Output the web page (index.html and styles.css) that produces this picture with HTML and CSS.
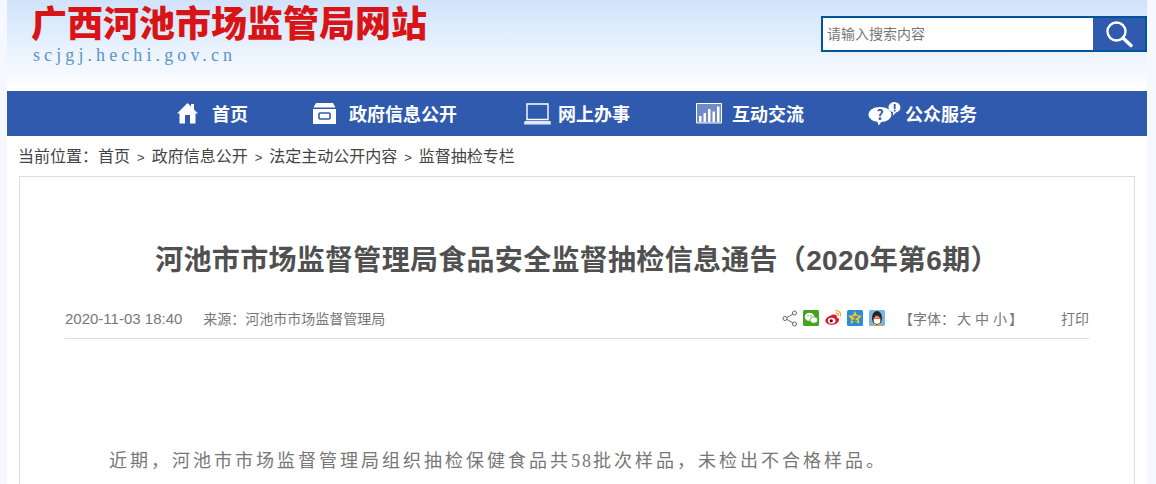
FILE: index.html
```html
<!DOCTYPE html>
<html lang="zh-CN">
<head>
  <meta charset="UTF-8">
  <title>河池市市场监督管理局食品安全监督抽检信息通告</title>
  <link rel="stylesheet" href="styles.css">
</head>
<body>
  <div class="page">
    <header class="top">
      <div class="logo">
        <div class="logo-name">广西河池市场监管局网站</div>
        <div class="logo-url">scjgj.hechi.gov.cn</div>
      </div>
      <form class="search">
        <div class="search-input">请输入搜索内容</div>
        <div class="search-btn">
          <svg width="28" height="28" viewBox="0 0 28 28"><circle cx="11.500" cy="11.500" r="9" fill="none" stroke="#fff" stroke-width="2.400"/><path d="M18 18l8 7.500" stroke="#fff" stroke-width="3.400" stroke-linecap="round"/></svg>
        </div>
      </form>
    </header>

    <nav class="nav">
      <a class="nav-item nav-home" href="#">
        <svg width="21" height="21" viewBox="0 0 21 21"><path fill="#fff" d="M10.500 0L14 3.400V1h3v5.400L21 10.500H18.500V20.500H13V12H8V20.500H2.500V10.500H0z"/></svg>
        <span>首页</span>
      </a>
      <a class="nav-item nav-gov" href="#">
        <svg width="23" height="21" viewBox="0 0 23 21"><path fill="#fff" d="M3 0H20L22.500 4.500H.5zM0 6H23V21H0z"/><rect x="6" y="10" width="11" height="6" rx="1" fill="#fff" stroke="#2f5aad" stroke-width="1.600"/></svg>
        <span>政府信息公开</span>
      </a>
      <a class="nav-item nav-online" href="#">
        <svg width="27" height="22" viewBox="0 0 27 22"><path fill="none" stroke="#fff" stroke-width="1.400" d="M3 1H24V16.500H3z"/><path fill="#dfe6f4" d="M.5 18H26.500L27 21.500H0z"/></svg>
        <span>网上办事</span>
      </a>
      <a class="nav-item nav-talk" href="#">
        <svg width="26" height="21" viewBox="0 0 26 21"><path fill="#6f8cc8" stroke="#fff" d="M.5.5H25.500V20H.5z"/><path fill="#fff" d="M3 13h2.500v6H3zM7.500 10H10v9H7.500zM12 6h2.500v13H12zM16.500 8.500H19V19h-2.500zM21 3.500h2.500V19H21z"/></svg>
        <span>互动交流</span>
      </a>
      <a class="nav-item nav-public" href="#">
        <svg width="33" height="24" viewBox="0 0 33 24"><path fill="#fff" d="M12 5c6.500 0 11.500 3 11.500 7.500S18 20 13.500 20L10.500 23.500 9.500 19.800C4 19 .5 16.500.5 12.500S5.500 5 12 5z"/><path fill="#fff" d="M26.500 0A6 6 0 0 1 32.500 5.500C32.500 8 30.500 10 28 10.500L25 13.500 25 10.200C22.500 9.500 20.500 8 20.500 5.500 20.500 2.500 23 0 26.500 0z"/><text x="12" y="17.500" class="nav-q">?</text><path fill="#2f5aad" d="M25.800 2h1.800v5h-1.800zM25.800 7.800h1.800v1.600h-1.800z"/></svg>
        <span>公众服务</span>
      </a>
    </nav>

    <div class="crumb">
      当前位置：<a href="#">首页</a><i>&gt;</i><a href="#">政府信息公开</a><i>&gt;</i><a href="#">法定主动公开内容</a><i>&gt;</i><a href="#">监督抽检专栏</a>
    </div>

    <main class="article">
      <h1 class="article-title">河池市市场监督管理局食品安全监督抽检信息通告（2020年第6期）</h1>
      <div class="meta">
        <div class="meta-left">
          <span class="meta-time">2020-11-03 18:40</span>
          <span>来源：河池市市场监督管理局</span>
        </div>
        <div class="meta-right">
          <svg class="share" width="16" height="17" viewBox="0 0 16 17"><path fill="none" stroke="#666" d="M12.500 3L3.500 8.500L12.500 14"/><circle cx="12.500" cy="3" r="2" fill="#fff" stroke="#666"/><circle cx="3" cy="8.500" r="2" fill="#fff" stroke="#666"/><circle cx="12.500" cy="14" r="2" fill="#fff" stroke="#666"/></svg>
          <svg class="social" width="16" height="16" viewBox="0 0 16 16"><rect width="16" height="16" rx="1.500" fill="#3fa51f"/><ellipse cx="6.500" cy="6.800" rx="4.800" ry="4" fill="#fff"/><ellipse cx="10.800" cy="10" rx="3.800" ry="3.200" fill="#fff" stroke="#3fa51f" stroke-width=".7"/><circle cx="5" cy="5.800" r=".7" fill="#3fa51f"/><circle cx="8" cy="5.800" r=".7" fill="#3fa51f"/></svg>
          <svg class="social" width="16" height="16" viewBox="0 .5 16.200 16.200"><path fill="#e6162d" d="M7 5.500C10.500 4.500 12.500 6 12 8 14 8.500 14.800 10 13.800 12 12.500 15 8.500 16 5.500 15.500 2.500 15 .3 13.500.3 11.500.3 9 3.500 6.500 7 5.500z"/><ellipse cx="6.800" cy="11.300" rx="3.800" ry="3" fill="#fff"/><circle cx="6.300" cy="11.500" r="1.700" fill="#222"/><path fill="none" stroke="#f5a623" stroke-width="1.300" d="M10.500 1.200C14 .8 16.500 3.500 15.800 7M10.800 3.800C12.500 3.500 13.800 5 13.400 6.700"/></svg>
          <svg class="social" width="16" height="16" viewBox="0 0 16 16"><rect width="16" height="16" rx="1.500" fill="#2a8ce0"/><path fill="#fbc71c" d="M8 1l2 4.200 5 .6-3.500 3.300 1 4.700L8 11.500 3.500 13.800l1-4.700L1 5.800l5-.6z"/><path fill="none" stroke="#2a7ac8" stroke-width="1.200" d="M5.800 6.800H10L6 10.800H10.400"/></svg>
          <svg class="social" width="16" height="16" viewBox="0 0 16 16"><rect width="16" height="16" rx="1.500" fill="#74b7ee"/><ellipse cx="8" cy="8" rx="5" ry="7" fill="#222"/><ellipse cx="8" cy="10.200" rx="3.400" ry="3.800" fill="#fff"/><path fill="#f5a11c" d="M5.500 5.800H10.500L8 7.400zM3.500 13.500H7.300V15.200H3zM8.800 13.500H12.500L13 15.200H8.800z"/><path fill="#e0352b" d="M4 7.500H12L11.700 8.800H4.300z"/></svg>
          <span class="font-size">【字体：<a href="#">大</a><a href="#">中</a><a href="#">小</a>】</span>
          <a class="print" href="#">打印</a>
        </div>
      </div>
      <p class="article-text">近期，河池市市场监督管理局组织抽检保健食品共<span class="num">58</span>批次样品，未检出不合格样品。</p>
    </main>
  </div>
</body>
</html>
```

FILE: styles.css
```css
* {
  margin: 0;
  padding: 0;
  box-sizing: border-box;
}

html, body {
  height: 484px;
  overflow: hidden;
}

body {
  font-family: "Liberation Sans", "Noto Sans CJK SC", sans-serif;
  background: #f5f8ff;
  color: #555;
}

a {
  color: inherit;
  text-decoration: none;
}

.page {
  width: 1140px;
  height: 484px;
  margin-left: 7px;
  background: #fff;
  overflow: hidden;
}

/* header */
.top {
  height: 91px;
  background: linear-gradient(#d0e3fb, #ffffff);
  display: flex;
  justify-content: space-between;
  padding-left: 24px;
}

.logo-name {
  font-family: "Liberation Sans", "Noto Sans CJK SC", sans-serif;
  font-size: 36px;
  font-weight: 900;
  line-height: 38px;
  padding-top: 6px;
  color: #da1416;
}

.logo-url {
  font-family: "Liberation Serif", serif;
  font-size: 18px;
  letter-spacing: 4.1px;
  line-height: 20px;
  color: #5a95c8;
  margin-top: 1px;
  padding-left: 2px;
}

.search {
  display: flex;
  width: 326px;
  height: 36px;
  margin-top: 16px;
  border: 2px solid #02559b;
}

.search-input {
  flex: 1;
  background: #fff;
  font-size: 14px;
  line-height: 32px;
  padding-left: 4px;
  color: #777;
}

.search-btn {
  width: 52px;
  background: #2f5aad;
  display: flex;
  align-items: center;
  justify-content: center;
}

/* nav */
.nav {
  height: 45px;
  background: #2f5aad;
  display: flex;
  align-items: center;
  padding-left: 170px;
}

.nav-item {
  display: flex;
  align-items: center;
  gap: 14px;
  color: #fff;
  font-family: "Noto Sans CJK SC", sans-serif;
  font-size: 18px;
  font-weight: 700;
}

.nav-item span {
  margin-top: -2px;
}

.nav-home { margin-right: 65px; }
.nav-gov { margin-right: 67px; gap: 13px; }
.nav-online { margin-right: 66px; gap: 7px; }
.nav-talk { margin-right: 64px; gap: 10px; }
.nav-public { gap: 4px; }

.nav-q {
  fill: #2f5aad;
  font-size: 14px;
  font-weight: 700;
  text-anchor: middle;
}

/* breadcrumb */
.crumb {
  height: 40px;
  padding: 11px 0 0 11px;
  font-size: 16px;
  line-height: 20px;
  color: #444;
}

.crumb i {
  font-style: normal;
  font-size: 13px;
  margin: 0 7px;
}

/* article */
.article {
  width: 1116px;
  height: 400px;
  margin-left: 12px;
  border: 1px solid #ddd;
  padding: 0 45px;
}

.article-title {
  margin-top: 64px;
  font-size: 28px;
  letter-spacing: .3px;
  line-height: 40px;
  font-weight: 700;
  text-align: center;
  color: #505050;
}

.meta {
  margin-top: 20px;
  height: 38px;
  border-bottom: 1px solid #ddd;
  display: flex;
  justify-content: space-between;
  align-items: center;
  font-size: 14px;
  color: #777;
  padding-bottom: 3px;
}

.meta-time {
  font-size: 15px;
  margin-right: 17px;
}

.meta-right {
  display: flex;
  align-items: center;
}

.share {
  margin-right: -1px;
}

.social {
  margin-left: 6px;
}

.font-size {
  margin-left: 14px;
}

.font-size a {
  margin: 0 2px;
}

.print {
  margin-left: 38px;
}

.article-text {
  margin-top: 106px;
  padding-left: 44px;
  font-family: "Liberation Serif", "Noto Sans CJK SC", serif;
  font-size: 18px;
  letter-spacing: 3px;
  line-height: 32px;
  color: #777;
}

.num {
  letter-spacing: 2px;
}
```
